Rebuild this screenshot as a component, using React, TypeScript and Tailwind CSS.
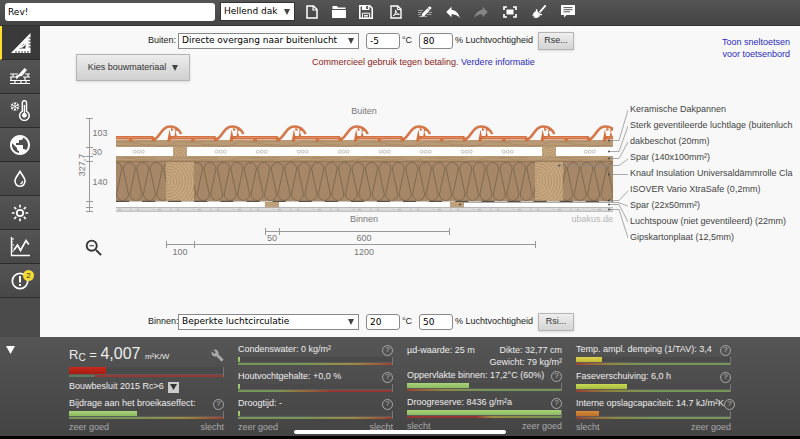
import type { ReactNode } from "react";
import { MdBuild, MdPublic, MdReply, MdZoomOut } from "react-icons/md";

const layers = [
  "Keramische Dakpannen",
  "Sterk geventileerde luchtlage (buitenluch",
  "dakbeschot (20mm)",
  "Spar (140x100mm²)",
  "Knauf Insulation Universaldämmrolle Cla",
  "ISOVER Vario XtraSafe (0,2mm)",
  "Spar (22x50mm²)",
  "Luchtspouw (niet geventileerd) (22mm)",
  "Gipskartonplaat (12,5mm)",
];

// leader lines from the section to the layer names
const leaders = [
  [609, 140.5, 628, 110],
  [609, 151.5, 628, 126],
  [609, 158.5, 628, 142],
  [559, 165.5, 628, 159],
  [609, 174.5, 628, 174.5],
  [609, 200.5, 628, 191],
  [460, 204.5, 628, 206],
  [609, 204.5, 628, 222],
  [609, 209.5, 628, 238],
];

const range = (n: number) => Array.from({ length: n }, (_, i) => i);

/* ---------- toolbar icons ---------- */

function NewIcon() {
  return (
    <svg width="12" height="14" viewBox="0 0 12 14" fill="none" stroke="#fff" strokeWidth="1.5">
      <path d="M1 1h6.5L11 4.5V13H1z" />
      <path d="M7 1v4h4" strokeWidth="1.2" />
    </svg>
  );
}

function OpenIcon() {
  return (
    <svg width="14" height="12" viewBox="0 0 14 12" fill="#fff">
      <path d="M.5 0H5l1 1.6h7.5V3H.5zM0 3.9h14V12H0z" />
    </svg>
  );
}

function SaveIcon() {
  return (
    <svg width="14" height="14" viewBox="0 0 14 14">
      <path d="M.8.8h9.9l2.5 2.5v9.9H.8z" fill="none" stroke="#fff" strokeWidth="1.6" />
      <path d="M3 0h7.4v5H3z" fill="#fff" />
      <path d="M7.2 1h1.7v3H7.2z" fill="#4c4c4c" />
      <path d="M3.4 13V8.2h7.2V13M5 10.4h4M5 12h4" fill="none" stroke="#fff" strokeWidth="1" />
    </svg>
  );
}

function PdfIcon() {
  return (
    <svg width="12" height="14" viewBox="0 0 12 14" fill="none" stroke="#fff" strokeWidth="1.4">
      <path d="M1 1h6.8L11 4.2V13H1z" />
      <path d="M7.4 1v3.6H11" strokeWidth="1" />
      <path d="M3 11c1.8-1 3-4 2.7-5.8C6 8 7.4 9.2 9.4 9.4 7 8.8 5 9.3 3 11z" strokeWidth="1" />
    </svg>
  );
}

function EditIcon() {
  return (
    <svg width="14" height="12" viewBox="0 0 14 12">
      <path d="M0 4.500h5M0 6.500h4M0 8.500h3M10.500 6.500H14M9 8.500h4.500M1 10.500h8" stroke="#bbb" strokeWidth=".8" />
      <path d="M3.400 11l.9-3.600L10.700.9c.7-.7 1.500-.6 2.200.1.700.700.700 1.400 0 2.100L6.700 9.700z" fill="#fff" />
      <path d="M9.400 1.900l2.500 2.500" stroke="#4c4c4c" strokeWidth=".7" />
    </svg>
  );
}

function FitIcon() {
  return (
    <svg width="14" height="12" viewBox="0 0 14 12">
      <path d="M4 1H1v3M10 1h3v3M4 11H1V8M10 11h3V8" fill="none" stroke="#fff" strokeWidth="1.700" />
      <path d="M3.500 3.500h7v5h-7z" fill="#fff" />
    </svg>
  );
}

function BroomIcon() {
  return (
    <svg width="14" height="14" viewBox="0 0 14 14">
      <path d="M13.200.8L8 6.800" stroke="#fff" strokeWidth="1.800" strokeLinecap="round" />
      <path d="M5 4l.8 2.700 1.900 1.900 2.700.7-1 1.300-3.400-1.100L3.900 7.300 3.800 4.600z" fill="#fff" />
      <path d="M3.300 6.200L8 10.800C6.800 12.600 4.500 13.400 2 13l1.200-1.500-2 .8.900-1.800-1.900.4C1 9.200 1.600 7.200 3.300 6.200z" fill="#fff" />
    </svg>
  );
}

function CommentIcon() {
  return (
    <svg width="14" height="13" viewBox="0 0 14 13">
      <path d="M0 0h14v10H5.500L3 12.600V10H0z" fill="#fff" />
      <path d="M2.500 2.600h9M2.500 4.700h9M2.500 6.800h6.500" stroke="#555" strokeWidth="1" />
    </svg>
  );
}

/* ---------- side navigation icons ---------- */

function RulerIcon() {
  return (
    <svg width="20" height="20" viewBox="0 0 20 20">
      <path d="M19.500 0v20H0zM14.500 9L8 15.600h6.500z" fill="#fff" fillRule="evenodd" />
      <path d="M8.500 14.500c4-.3 6.500-3.500 6-8.500" stroke="#fff" strokeWidth="1.500" fill="none" />
      <path d="M6.500 12.500c.5-1 1-1.500 2-2" stroke="#3a3a3a" strokeWidth="1" fill="none" />
      <path d="M17.500 5H20M17.500 8H20M17.500 11H20M17.500 14H20M5 20v-2M8 20v-2M11 20v-2M14 20v-2M17 20v-2" stroke="#3a3a3a" strokeWidth="1" />
    </svg>
  );
}

function LayersIcon() {
  return (
    <svg width="20" height="17" viewBox="0 0 20 17">
      <path d="M0 6h8M0 9h6M0 12.500h20M0 15.500h20M15 6h5M13 9h7M3 6v3M1 9v3M5 12v4M11 12v4M16 12v4M18 6v3M15 9v3" stroke="#fff" strokeWidth="1.200" />
      <path d="M14.500 0L17 2l-5 6-3 .5L6.500 11.500 5.800 8l2.700-1.200z" fill="#fff" />
    </svg>
  );
}

function ClimateIcon() {
  return (
    <svg width="20" height="21" viewBox="0 0 20 21" fill="none" stroke="#fff">
      <path d="M5 2v9M1.100 4.200l7.800 4.600M1.100 8.800l7.800-4.600M3.600 2.600L5 4l1.400-1.400M3.600 10.400L5 9l1.400 1.400M.8 6.200l1.800-.9-.1-1.900M9.200 6.800l-1.800.9.1 1.900M.8 6.800l1.800.9-.1 1.900M9.200 6.200l-1.800-.9.1-1.900" strokeWidth=".9" />
      <path d="M12.300 11.300V2.800a2.100 2.100 0 0 1 4.200 0v8.500a4.800 4.800 0 1 1-4.200 0z" strokeWidth="1.500" />
      <path d="M14.400 5v8" strokeWidth="1.300" />
      <circle cx="14.400" cy="15.300" r="2" fill="#fff" />
    </svg>
  );
}

function DropIcon() {
  return (
    <svg width="14" height="18" viewBox="0 0 14 18" fill="none" stroke="#fff">
      <path d="M7 1.500c2 3.500 5 6 5 9.800a5 5 0 0 1-10 0C2 7.500 5 5 7 1.500z" strokeWidth="1.600" />
      <path d="M9.500 11c0 1.600-.8 2.500-2.200 2.800" strokeWidth="1.200" />
    </svg>
  );
}

function SunIcon() {
  return (
    <svg width="18" height="18" viewBox="0 0 18 18" fill="none" stroke="#fff" strokeWidth="1.700">
      <circle cx="9" cy="9" r="3.200" />
      <path d="M9 .8v2.800M9 14.400v2.800M.8 9h2.800M14.400 9h2.800M3.200 3.200l2 2M12.800 12.800l2 2M3.200 14.800l2-2M12.800 5.200l2-2" />
    </svg>
  );
}

function ChartIcon() {
  return (
    <svg width="20" height="20" viewBox="0 0 20 20" fill="none" stroke="#fff">
      <path d="M1.500 0v18.500H20" strokeWidth="1.400" />
      <path d="M1 2h3M1 5h2M1 8h3M1 11h2M1 14h3" strokeWidth="1" />
      <path d="M4 13l3.500-5 3 5.500L16 3.500l2.800 4" strokeWidth="1.700" />
    </svg>
  );
}

function AlertIcon() {
  return (
    <svg width="18" height="18" viewBox="0 0 18 18" fill="none" stroke="#fff">
      <circle cx="9" cy="9" r="7.700" strokeWidth="1.700" />
      <path d="M9 4v6.400M9 12v2" strokeWidth="2" />
    </svg>
  );
}

function ToolButton({ label, width = "w-[29px]", children }: { label: string; width?: string; children: ReactNode }) {
  return (
    <button type="button" aria-label={label} className={`${width} flex h-5 shrink-0 items-center justify-center text-white`}>
      {children}
    </button>
  );
}

function Header() {
  return (
    <header className="flex h-[26px] items-center border-b border-[#333] bg-linear-to-b from-[#555] to-[#444] pb-0.5 pl-[5px]">
      <input
        aria-label="Projectnaam"
        defaultValue="Rev!"
        className="h-[18px] w-[210px] rounded-[3px] bg-white px-[3px] font-['DejaVu_Sans'] text-[9px] text-black"
      />
      <span className="relative ml-[5px] mr-[3px]">
        <select aria-label="Constructie" className="block h-[19px] w-[75px] appearance-none border border-[#333] bg-white pl-[3px] font-['DejaVu_Sans'] text-[9px] text-black">
          <option>Hellend dak</option>
        </select>
        <Caret />
      </span>
      <ToolButton label="Nieuw" width="w-[27px]"><NewIcon /></ToolButton>
      <ToolButton label="Openen" width="w-[27px]"><OpenIcon /></ToolButton>
      <ToolButton label="Opslaan" width="w-[27px]"><SaveIcon /></ToolButton>
      <div className="ml-0.5 flex">
        <ToolButton label="PDF"><PdfIcon /></ToolButton>
        <ToolButton label="Bewerken"><EditIcon /></ToolButton>
        <ToolButton label="Ongedaan maken" width="w-[28px]"><MdReply size={18} /></ToolButton>
        <ToolButton label="Opnieuw" width="w-[28px]"><MdReply size={18} className="-scale-x-100 text-[#868686]" /></ToolButton>
        <ToolButton label="Passend"><FitIcon /></ToolButton>
        <ToolButton label="Opschonen"><BroomIcon /></ToolButton>
        <ToolButton label="Opmerking"><CommentIcon /></ToolButton>
      </div>
    </header>
  );
}

function Caret() {
  return (
    <svg width="6" height="6" viewBox="0 0 6 6" className="pointer-events-none absolute right-[5px] top-1/2 -translate-y-1/2">
      <path d="M0 0h6L3 6z" fill="#444" />
    </svg>
  );
}

const navItems = [
  { label: "Constructie", icon: <RulerIcon /> },
  { label: "Lagen", icon: <LayersIcon /> },
  { label: "Klimaat", icon: <ClimateIcon /> },
  { label: "Milieu", icon: <MdPublic size={24} /> },
  { label: "Vocht", icon: <DropIcon /> },
  { label: "Hitte", icon: <SunIcon /> },
  { label: "Grafiek", icon: <ChartIcon /> },
  { label: "Meldingen", icon: <AlertIcon />, badge: 2 },
];

function SideNav() {
  return (
    <nav className="w-10 shrink-0 bg-[#4b4b4b]">
      {navItems.map((item, i) => (
        <button
          key={item.label}
          type="button"
          aria-label={item.label}
          className={`relative flex h-[34px] w-full items-center justify-center border-b border-[#2c2c2c] text-white ${
            i === 0 ? "border-l-2 border-l-[#ffe131] bg-[#3a3a3a]" : "bg-linear-to-b from-[#545454] to-[#484848]"
          }`}
        >
          {item.icon}
          {item.badge && (
            <span className="absolute right-[6px] top-[6px] flex size-[11px] items-center justify-center rounded-full bg-[#f5dc35] text-[8px] leading-none text-[#333]">
              {item.badge}
            </span>
          )}
        </button>
      ))}
    </nav>
  );
}

function ClimateRow({ id, label, option, temp, humidity, button }: {
  id: string;
  label: string;
  option: string;
  temp: string;
  humidity: string;
  button: string;
}) {
  return (
    <div className="flex items-center pl-[108px] text-[9px] whitespace-nowrap text-[#222]">
      <label htmlFor={id} className="w-[30px]">{label}</label>
      <span className="relative">
        <select id={id} className="block h-4 w-[181px] appearance-none border border-[#888] bg-white pl-[3px] font-['DejaVu_Sans'] text-[9px] text-black">
          <option>{option}</option>
        </select>
        <Caret />
      </span>
      <input
        id={`${id}-temp`}
        defaultValue={temp}
        className="ml-[7px] h-4 w-[34px] rounded-[3px] border border-[#888] bg-white px-[3px] font-['DejaVu_Sans'] text-[9px] text-black"
      />
      <label htmlFor={`${id}-temp`} className="w-[19px] pl-0.5">°C</label>
      <input
        id={`${id}-rh`}
        defaultValue={humidity}
        className="h-4 w-[34px] rounded-[3px] border border-[#888] bg-white px-[3px] font-['DejaVu_Sans'] text-[9px] text-black"
      />
      <label htmlFor={`${id}-rh`} className="w-[85px] pl-0.5">% Luchtvochtigheid</label>
      <button type="button" className="h-[18px] w-[36px] border border-[#b5b5b5] bg-linear-to-b from-[#eee] to-[#d4d4d4] text-[#333] shadow-sm">
        {button}
      </button>
    </div>
  );
}

// one tile: the strip, and the arch of the tile before it with its two hooks
function Tile({ x, arch }: { x: number; arch: boolean }) {
  return (
    <g transform={`translate(${x} 0)`}>
      <path d="M0 136h47v3.500H0z" fill="#d2703f" />
      <path d="M2 137.500h44" stroke="#e8a583" strokeWidth=".6" />
      <path d="M22.500 139h3.500v2h-3.500zM45.300 137.500h4v3.500h-4z" fill="#d2703f" />
      {arch && (
        <>
          <path d="M-14 139.500C-8 136-7 126.500 1.500 126.500c5 0 8.500 2.500 11 7.500" fill="none" stroke="#d4774a" strokeWidth="2.600" />
          <path d="M-1.500 141.500L.8 129.500l1.500 7.500H6l-3.500 1-1 3.500zM5.500 137l1.200-6 1.600 5.500z" fill="#d2703f" />
          <path d="M2 127l.5 4 2.500-1zM7 128l-1 4 3-2z" fill="#d2703f" />
        </>
      )}
    </g>
  );
}

function Board({ x, y, w, h }: { x: number; y: number; w: number; h: number }) {
  return (
    <g>
      <rect x={x} y={y} width={w} height={h} fill="#b99a76" />
      {range(8).map((i) => (
        <path
          key={i}
          d={`M${x + i * 62} ${y + 1.5}q16 0 31 ${h - 3}t31 ${3 - h}M${x + i * 62} ${y + h - 1.5}h24q10-2 20 0h18M${x + i * 62 + 10} ${y + 1.5}h30`}
          fill="none"
          stroke="#a3845f"
          strokeWidth=".6"
        />
      ))}
    </g>
  );
}

function Insulation({ from, to }: { from: number; to: number }) {
  const pitch = 13.46;
  const first = Math.floor((from - 277.3) / pitch) - 1;
  const count = Math.ceil((to - from) / pitch) + 3;
  const id = `ins-${from}`;
  return (
    <g>
      <clipPath id={id}>
        <rect x={from} y="161" width={to - from} height="40" />
      </clipPath>
      <g clipPath={`url(#${id})`}>
        <rect x={from} y="161" width={to - from} height="40" fill="#a68868" />
        {range(count).map((i) => {
          const x = 277.3 + (first + i) * pitch;
          return (
            <path
              key={i}
              d={`M${x - 6} 169a6 6.500 0 0 1 12 0L${x + 0.7} 194a6 6.500 0 0 0 12 0L${x + 7.4} 169`}
              fill="none"
              stroke="#6f5b45"
              strokeWidth=".7"
            />
          );
        })}
      </g>
    </g>
  );
}

function Spar({ x, y, w, h, step }: { x: number; y: number; w: number; h: number; step: number }) {
  const id = `spar-${x}`;
  const big = h > 20;
  return (
    <g>
      <clipPath id={id}>
        <rect x={x} y={y} width={w} height={h} />
      </clipPath>
      <g clipPath={`url(#${id})`}>
        <rect x={x} y={y} width={w} height={h} fill="#c8a880" />
        {range(14).map((i) => (
          <circle
            key={i}
            cx={big ? x + 1 : x + w / 2}
            cy={big ? y + h / 2 : y + h}
            r={1 + i * step}
            fill="none"
            stroke="#ad8d66"
            strokeWidth=".9"
          />
        ))}
      </g>
    </g>
  );
}

function SectionDrawing() {
  return (
    <svg width="556" height="160" viewBox="72 100 556 160" className="shrink-0" role="img" aria-label="Doorsnede">
      <clipPath id="section">
        <rect x="116" y="118" width="497" height="94" />
      </clipPath>
      <g clipPath="url(#section)">
        <Board x={116} y={140} w={497} h={7} />
        {range(9).map((i) => (
          <Tile key={i} x={106.5 + i * 62.2} arch={i > 0} />
        ))}
        <rect x="116" y="147" width="497" height="9" fill="#fff" />
        {range(12).filter((i) => i !== 1 && i !== 10).map((i) => (
          <g key={i} fill="none" stroke="#b5b0a8" strokeWidth=".8">
            <circle cx={134.7 + i * 41} cy="151.700" r="1.500" />
            <circle cx={138.7 + i * 41} cy="151.700" r="1.500" />
            <circle cx={142.7 + i * 41} cy="151.700" r="1.500" />
          </g>
        ))}
        <Spar x={173} y={147} w={14} h={9} step={2.5} />
        <Spar x={542} y={147} w={14} h={9} step={2.5} />
        <Board x={116} y={156} w={497} h={6} />
        <Insulation from={116} to={166} />
        <Insulation from={194} to={535} />
        <Insulation from={563} to={613} />
        <path d="M116 161.500h497" stroke="#8a6f50" strokeWidth=".7" />
        <Spar x={166} y={162} w={28} h={39} step={2.9} />
        <Spar x={535} y={162} w={28} h={39} step={2.9} />
        <rect x="116" y="202" width="497" height="5" fill="#fff" />
        <Spar x={265} y={202} w={14} h={6} step={2.5} />
        <Spar x={450} y={202} w={14} h={6} step={2.5} />
        <path d="M116 201.300h497" stroke="#b3a594" strokeWidth=".8" />
        <path d="M116 201.300h497" stroke="#5a5048" strokeWidth="1.300" strokeDasharray="13 13.100" />
        <rect x="116" y="207.500" width="497" height="4" fill="#dcdcdc" />
        <path d="M116 207.500h497M116 211.300h497" stroke="#a9a9a9" strokeWidth=".8" />
        <path d="M118 209.500h497" stroke="#999" strokeWidth=".7" strokeDasharray="3 9 1 6 2 14 1 4" />
      </g>

      <g fill="none" stroke="#888" strokeWidth=".7">
        {leaders.map(([x1, y1, x2, y2]) => (
          <path key={y2} d={`M${x1} ${y1}${x1 === 460 ? "L464 202.5H618" : "H619"}L${x2} ${y2}`} />
        ))}
      </g>
      {leaders.map(([x, y, , labelY]) => (
        <circle key={labelY} cx={x} cy={y} r=".9" fill="#444" />
      ))}

      <g fill="none" stroke="#999" strokeWidth="1">
        <path d="M89.500 118v93M86 118.500h7M86 147.500h7M86 156.500h7M86 161.500h7M86 201.500h7M86 207.500h7M86 211.500h7" />
        <path d="M265 231.500h185M265.500 228v7M279.500 228v7M449.500 228v7" />
        <path d="M166 244.500h369M166.500 241v7M194.500 241v7M535.500 241v7" />
      </g>
      <g fill="#777" fontSize="9" textAnchor="middle">
        <text x="364" y="114">Buiten</text>
        <text x="364" y="222">Binnen</text>
        <text x="100" y="136">103</text>
        <text x="97" y="155">30</text>
        <text x="100" y="185">140</text>
        <text x="0" y="0" transform="translate(85 165) rotate(-90)">327,7</text>
        <text x="272" y="241">50</text>
        <text x="364" y="241">600</text>
        <text x="180" y="255">100</text>
        <text x="364" y="255">1200</text>
        <text x="613" y="222" textAnchor="end" fill="#b5b5b5">ubakus.de</text>
      </g>
    </svg>
  );
}

function HelpButton() {
  return (
    <button type="button" aria-label="Help" className="flex size-[11px] shrink-0 items-center justify-center rounded-full border border-[#aaa] text-[8px] leading-none text-[#bbb]">
      ?
    </button>
  );
}

const scales = {
  goodBad: "bg-linear-to-r from-[#7fa85a] from-40% via-[#b09a3c] via-75% to-[#b03a2c]",
  earlyBad: "bg-linear-to-r from-[#7fa85a] from-25% via-[#a08a3c] via-35% to-[#a8322c] to-60%",
  badGood: "bg-linear-to-r from-[#b03a2c] via-[#9a9a3c] via-25% to-[#7fa85a] to-50%",
  lateGood: "bg-linear-to-r from-[#a8322c] from-45% via-[#b09a3c] via-55% to-[#7fa85a]",
  insulation: "bg-linear-to-r from-[#5f8560] from-16% to-[#a8322c] to-17%",
};

const fills = {
  green: "bg-linear-to-b from-[#a9d27c] to-[#8cbb5c]",
  lime: "bg-linear-to-b from-[#c8d855] to-[#a9bd3c]",
  yellow: "bg-linear-to-b from-[#ddd04c] to-[#c4b832]",
  orange: "bg-linear-to-b from-[#d98a3e] to-[#bd6f28]",
  red: "bg-linear-to-b from-[#c62a1c] to-[#a81c12]",
};

function Bar({ value, fill, scale, tall }: { value: number; fill: keyof typeof fills; scale: keyof typeof scales; tall?: boolean }) {
  return (
    <div className="border-r border-[#777]">
      <div className={`${tall ? "h-[7px]" : "h-[5px]"} bg-[#4a4a4a]`}>
        <div className={`h-full ${fills[fill]}`} style={{ width: `${value}%` }} />
      </div>
      <div className="h-px bg-[#5c5c5c]" />
      <div className={`h-0.5 opacity-80 ${scales[scale]}`} />
    </div>
  );
}

function Metric({ label, ...bar }: { label: string; value: number; fill: keyof typeof fills; scale: keyof typeof scales }) {
  return (
    <div className="h-[27px]">
      <div className="flex h-[14px] items-center justify-between whitespace-nowrap">
        <span>{label}</span>
        <HelpButton />
      </div>
      <Bar {...bar} />
    </div>
  );
}

function ScaleLabels({ left, right }: { left: string; right: string }) {
  return (
    <div className="-mt-[3px] flex justify-between leading-3 text-[#aaa]">
      <span>{left}</span>
      <span>{right}</span>
    </div>
  );
}

function Results() {
  return (
    <footer className="relative border-b-3 border-black bg-linear-to-b from-[#555] to-[#444] text-[9px] text-[#eee]">
      <div className="flex pr-[69px] pb-[3px] pt-[6px]">
        <div className="w-[69px] shrink-0 pl-[6px] pt-[3px]">
          <button type="button" aria-label="Inklappen" className="block">
            <svg width="9" height="8" viewBox="0 0 9 8"><path d="M0 0h9L4.500 8z" fill="#fff" /></svg>
          </button>
        </div>
        <div className="grid flex-1 grid-cols-4 gap-[14px]">
          <section className="min-w-0">
            <div className="flex h-6 items-center justify-between">
              <p className="text-[16px] leading-5 whitespace-nowrap">
                <span className="text-[13px]">R</span>
                <sub className="text-[10px]">C</sub>
                <span className="text-[13px]"> = </span>4,007 <span className="text-[8px]">m²K/W</span>
              </p>
              <button type="button" aria-label="Instellingen" className="text-[#aaa]"><MdBuild size={13} /></button>
            </div>
            <Bar value={24} fill="red" scale="insulation" tall />
            <div className="flex h-5 items-center gap-1 whitespace-nowrap">
              <label htmlFor="norm">Bouwbesluit 2015 Rc&gt;6</label>
              <button id="norm" type="button" aria-label="Norm kiezen" className="flex size-[11px] items-center justify-center bg-[#ccc]">
                <svg width="7" height="6" viewBox="0 0 7 6"><path d="M0 0h7L3.500 6z" fill="#333" /></svg>
              </button>
            </div>
            <Metric label="Bijdrage aan het broeikaseffect:" value={44} fill="green" scale="goodBad" />
            <ScaleLabels left="zeer goed" right="slecht" />
          </section>

          <section className="min-w-0">
            <Metric label="Condenswater: 0 kg/m²" value={1} fill="green" scale="goodBad" />
            <Metric label="Houtvochtgehalte: +0,0 %" value={1} fill="green" scale="earlyBad" />
            <Metric label="Droogtijd: -" value={1} fill="green" scale="goodBad" />
            <ScaleLabels left="zeer goed" right="slecht" />
          </section>

          <section className="min-w-0">
            <div className="flex h-[26px] justify-between pt-px leading-3 whitespace-nowrap">
              <span>µd-waarde: 25 m</span>
              <span className="text-right">Dikte: 32,77 cm<br />Gewicht: 79 kg/m²</span>
            </div>
            <Metric label="Oppervlakte binnen: 17,2°C (60%)" value={40} fill="green" scale="badGood" />
            <Metric label="Droogreserve: 8436 g/m²a" value={100} fill="green" scale="lateGood" />
            <ScaleLabels left="slecht" right="zeer goed" />
          </section>

          <section className="min-w-0">
            <Metric label="Temp. ampl. demping (1/TAV): 3,4" value={17} fill="yellow" scale="badGood" />
            <Metric label="Faseverschuiving: 6,0 h" value={33} fill="lime" scale="badGood" />
            <Metric label="Interne opslagcapaciteit: 14.7 kJ/m²K" value={15} fill="orange" scale="badGood" />
            <ScaleLabels left="slecht" right="zeer goed" />
          </section>
        </div>
      </div>
      <div className="absolute bottom-0.5 left-1/2 h-1 w-[212px] -translate-x-1/2 rounded-full bg-white" />
    </footer>
  );
}

export default function App() {
  return (
    <div className="flex min-h-screen flex-col bg-[#f8f8f8] font-['Liberation_Sans',sans-serif]">
      <Header />
      <div className="flex flex-1">
        <SideNav />
        <main className="flex min-w-0 flex-1 flex-col pb-[6px] pt-[6px]">
          <div className="flex justify-between">
            <div>
              <ClimateRow id="buiten" label="Buiten:" option="Directe overgang naar buitenlucht" temp="-5" humidity="80" button="Rse..." />
              <div className="mt-1 flex items-start pl-9 text-[9px]">
                <button type="button" className="flex h-[27px] w-[114px] items-center justify-center gap-[6px] border border-[#b5b5b5] bg-linear-to-b from-[#ececec] to-[#d0d0d0] text-[#333] shadow-sm">
                  Kies bouwmateriaal
                  <svg width="6" height="6" viewBox="0 0 6 6"><path d="M0 0h6L3 6z" fill="#444" /></svg>
                </button>
                <p className="ml-[122px] pt-0.5 leading-3 text-[#8c1a1a]">
                  Commercieel gebruik tegen betaling.{" "}
                  <a href="#info" className="text-[#2a2ac0]">Verdere informatie</a>
                </p>
              </div>
            </div>
            <a href="#sneltoetsen" className="pr-[10px] pt-1 text-right text-[9px] leading-3 text-[#2a2ac0]">
              Toon sneltoetsen<br />voor toetsenbord
            </a>
          </div>

          <div className="relative mb-auto mt-[19px] flex overflow-hidden pl-8">
            <SectionDrawing />
            <ul className="min-w-0 flex-1 overflow-hidden pl-0.5 pt-px text-[9px] leading-4 whitespace-nowrap text-[#444]">
              {layers.map((name) => (
                <li key={name}>{name}</li>
              ))}
            </ul>
            <button type="button" aria-label="Uitzoomen" className="absolute bottom-[1px] left-[43px] text-[#333]">
              <MdZoomOut size={22} />
            </button>
          </div>

          <ClimateRow id="binnen" label="Binnen:" option="Beperkte luchtcirculatie" temp="20" humidity="50" button="Rsi..." />
        </main>
      </div>
      <Results />
    </div>
  );
}
